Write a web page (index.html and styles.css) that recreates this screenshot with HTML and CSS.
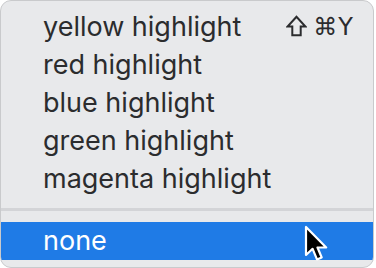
FILE: index.html
```html
<!DOCTYPE html>
<html>
<head>
<meta charset="utf-8">
<link rel="stylesheet" href="styles.css">
</head>
<body>
<div class="menu">
  <div class="item"><span class="label">yellow highlight</span><span class="shortcut"><svg class="shift" width="21" height="22" viewBox="0 0 21 22"><path d="M10.5 1.8 L1.6 11.5 H6.3 V20.2 H14.7 V11.5 H19.4 Z" fill="none" stroke="#2b2c2e" stroke-width="2" stroke-linejoin="miter"/></svg><span class="keys">⌘Y</span></span></div>
  <div class="item"><span class="label">red highlight</span></div>
  <div class="item"><span class="label">blue highlight</span></div>
  <div class="item"><span class="label">green highlight</span></div>
  <div class="item"><span class="label">magenta highlight</span></div>
  <div class="separator"></div>
  <div class="item selected"><span class="label">none</span>
    <svg class="cursor" width="28" height="40" viewBox="0 0 28 40">
      <path d="M3 3 V31 L9.6 24.8 L14 35.4 L18.7 33.5 L14.5 23.5 H23.2 Z" fill="#000" stroke="#fff" stroke-width="2.2" stroke-linejoin="round"/>
    </svg>
  </div>
</div>
</body>
</html>
```
FILE: styles.css
```css
html, body {
  margin: 0;
  padding: 0;
  background: #ffffff;
}
.menu {
  width: 374px;
  height: 268px;
  box-sizing: border-box;
  border: 1px solid #c9cacc;
  border-radius: 11px;
  background: #e8e9eb;
  overflow: hidden;
  padding-top: 7px;
  font-family: Inter, "Noto Sans", sans-serif;
  font-size: 27px;
  color: #2b2c2e;
}
.item {
  position: relative;
  height: 38px;
  line-height: 38px;
  display: flex;
  align-items: center;
  justify-content: space-between;
  padding: 0 19px 0 42px;
}
.shortcut {
  display: flex;
  align-items: center;
  gap: 6px;
}
.shift {
  display: block;
  margin-top: -2px;
}
.keys {
  font-family: "DejaVu Sans", sans-serif;
  font-size: 24px;
  letter-spacing: 1px;
}
.separator {
  height: 3px;
  margin: 10px 0 11px;
  background: #d3d4d7;
}
.selected {
  background: #1f7be6;
  color: #ffffff;
}
.cursor {
  position: absolute;
  left: 302px;
  top: 2px;
}
```
